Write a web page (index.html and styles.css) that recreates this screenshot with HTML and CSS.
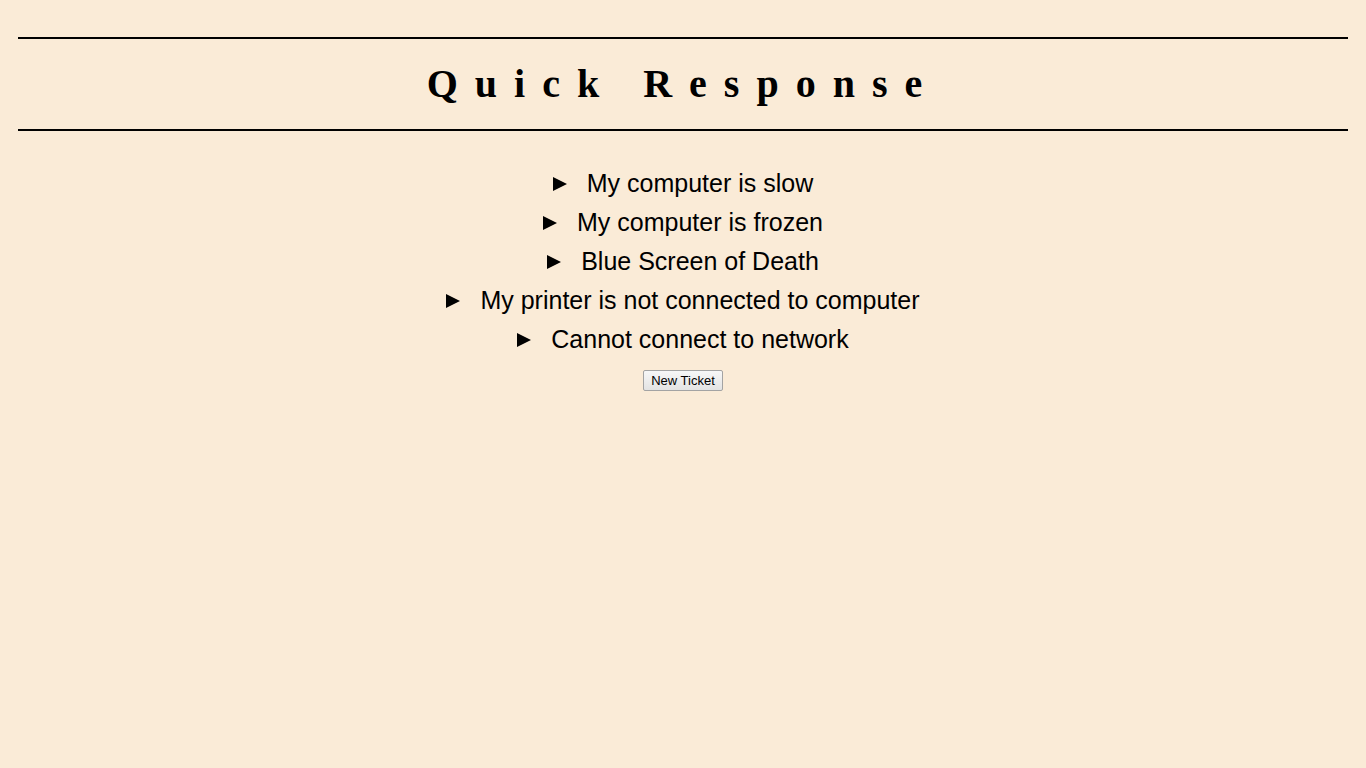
FILE: index.html
```html
<!DOCTYPE html>
<html>
<head>
<meta charset="utf-8">
<title>Quick Response</title>
<link rel="stylesheet" href="styles.css">
</head>
<body>
<div class="page">
  <hr class="rule">
  <h1 class="title">Quick Response</h1>
  <hr class="rule">
  <div class="issues">
    <details class="issue"><summary><span class="tri"></span><span>My computer is slow</span></summary></details>
    <details class="issue"><summary><span class="tri"></span><span>My computer is frozen</span></summary></details>
    <details class="issue"><summary><span class="tri"></span><span>Blue Screen of Death</span></summary></details>
    <details class="issue"><summary><span class="tri"></span><span>My printer is not connected to computer</span></summary></details>
    <details class="issue"><summary><span class="tri"></span><span>Cannot connect to network</span></summary></details>
  </div>
  <div class="actions">
    <button class="new-ticket" type="button">New Ticket</button>
  </div>
</div>
</body>
</html>
```

FILE: styles.css
```css
html, body {
  margin: 0;
  padding: 0;
  background: #faebd7;
}

.page {
  padding: 37px 18px 0 18px;
}

.rule {
  margin: 0;
  border: 0;
  border-top: 2px solid #000;
  height: 0;
}

.title {
  margin: 0;
  height: 90px;
  display: flex;
  align-items: center;
  justify-content: center;
  font-family: "Liberation Serif", "Times New Roman", serif;
  font-weight: bold;
  font-size: 40px;
  letter-spacing: 17px;
  color: #000;
  padding-bottom: 2px;
  box-sizing: border-box;
}

.issues {
  margin-top: 33px;
  display: flex;
  flex-direction: column;
  font-family: "Liberation Sans", Arial, sans-serif;
  font-size: 25px;
}

.issue summary {
  list-style: none;
  display: flex;
  align-items: center;
  justify-content: center;
  gap: 20px;
  height: 39px;
  cursor: pointer;
}

.issue summary::-webkit-details-marker {
  display: none;
}

.tri {
  width: 0;
  height: 0;
  border-top: 7.5px solid transparent;
  border-bottom: 7.5px solid transparent;
  border-left: 14px solid #000;
}

.actions {
  margin-top: 11px;
  display: flex;
  justify-content: center;
}

.new-ticket {
  font-family: "Liberation Sans", Arial, sans-serif;
  font-size: 13px;
  padding: 2px 7px;
  color: #000;
  background: linear-gradient(#f7f7f7, #e3e3e3);
  border: 1px solid #a3a3a3;
  border-radius: 2px;
}
```
